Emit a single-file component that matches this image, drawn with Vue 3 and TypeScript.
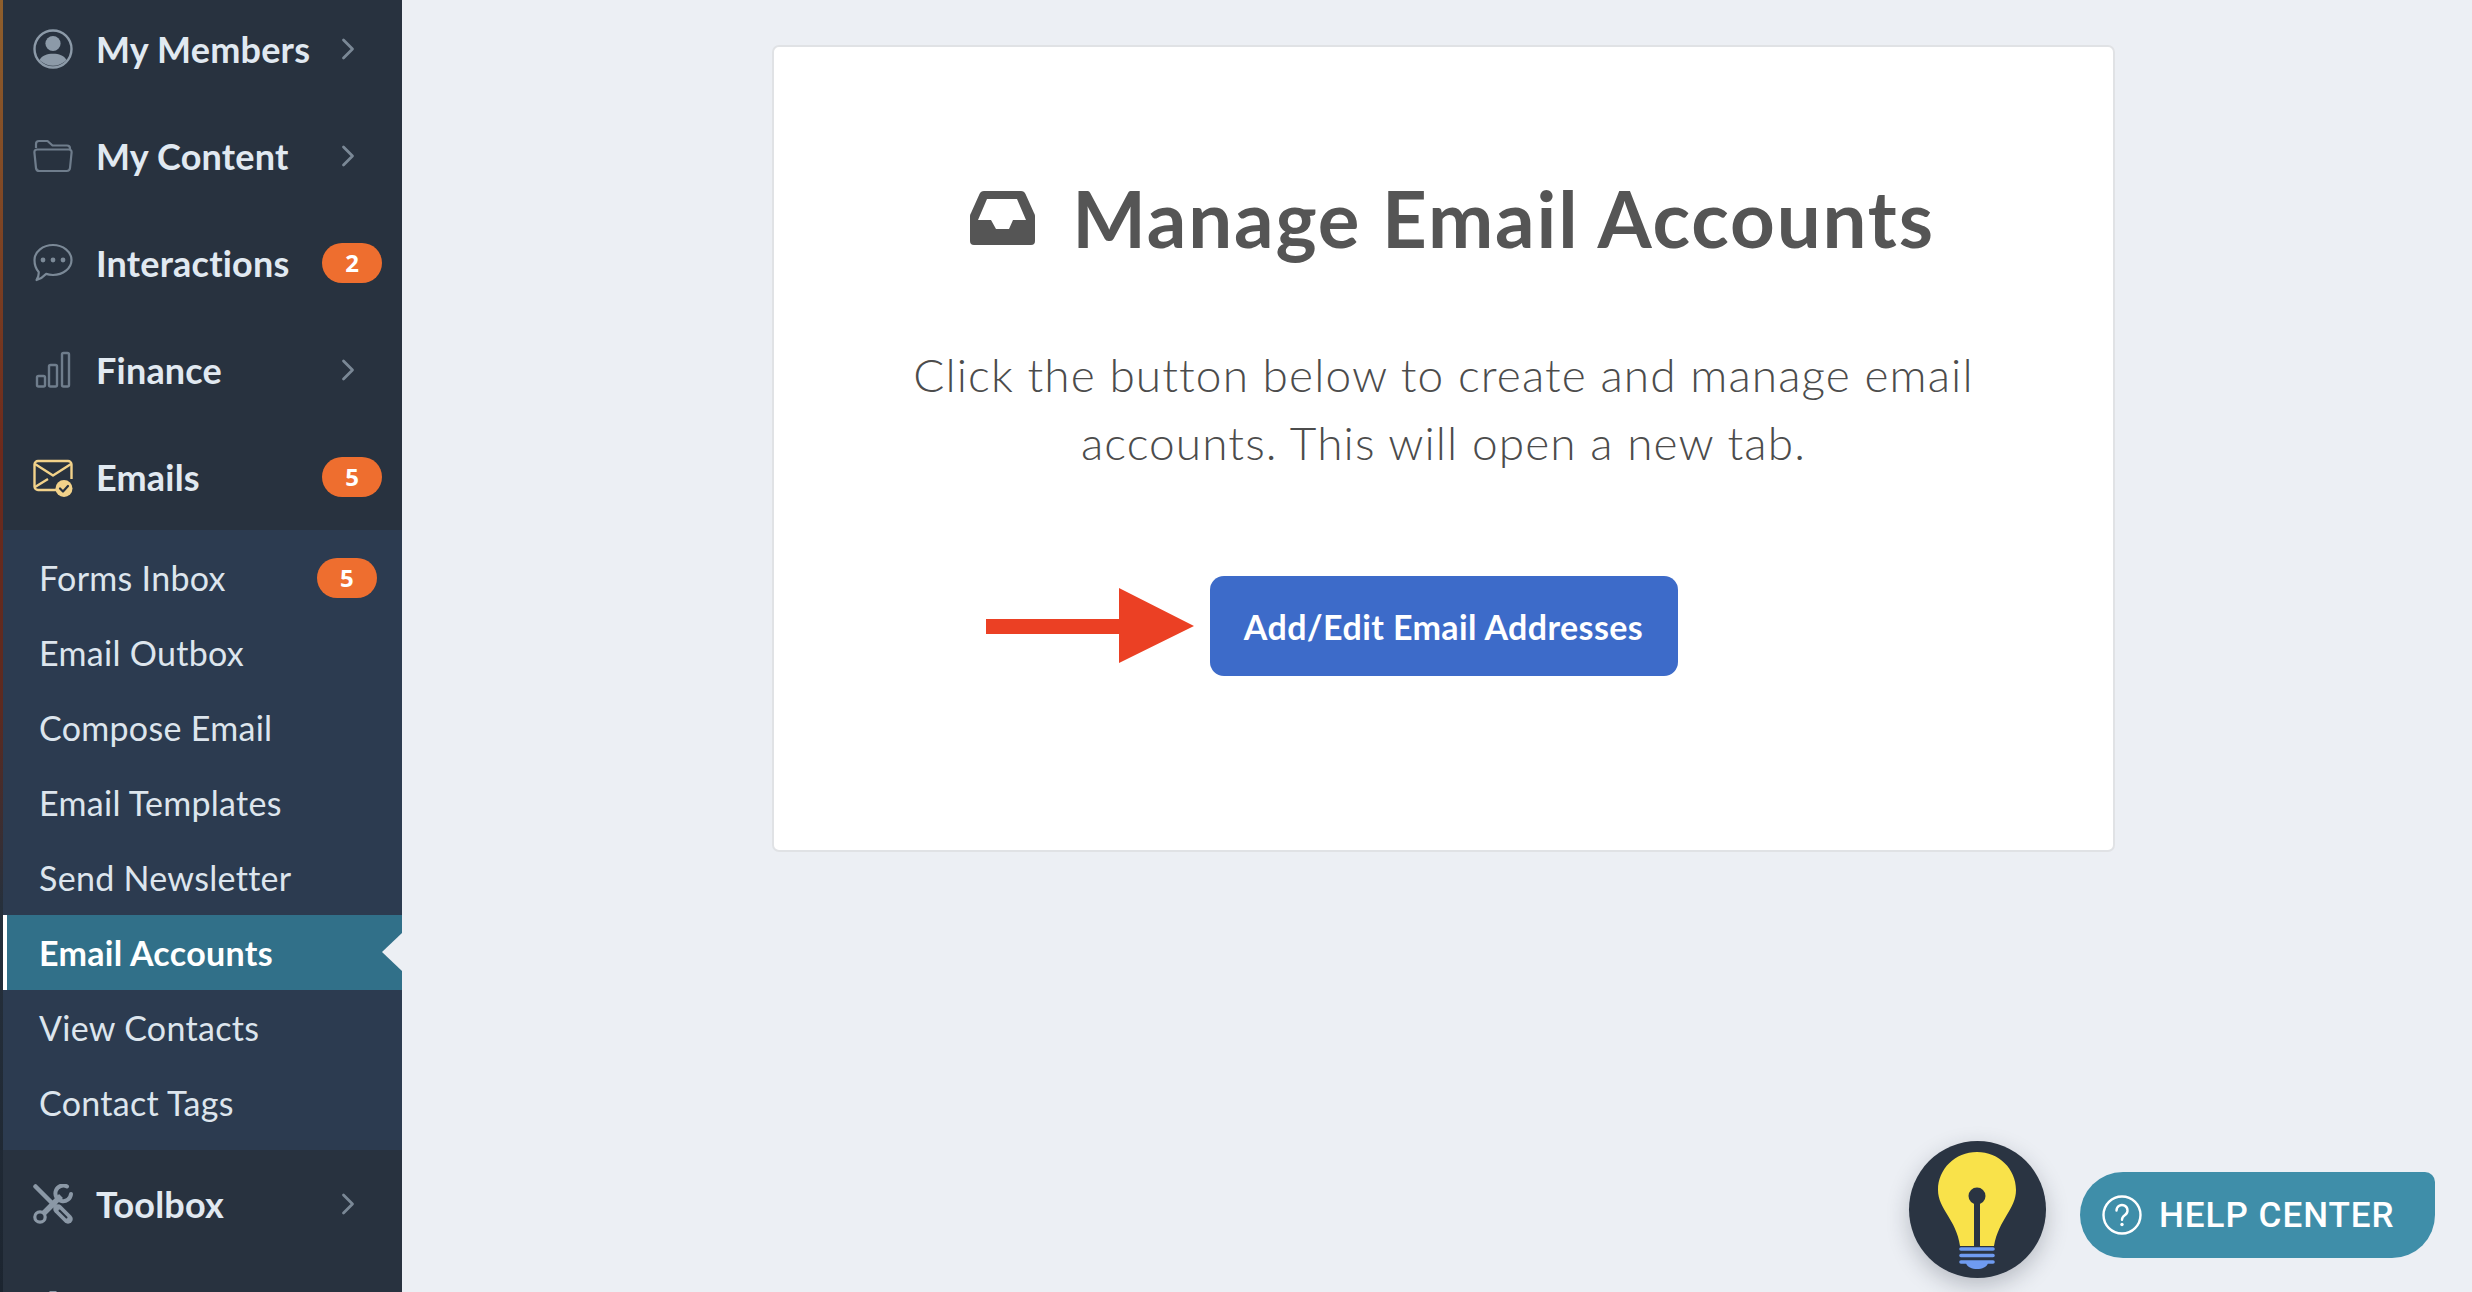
<template>
  <div class="page">
    <div class="strip"></div>
    <aside class="sidebar">
      <template v-for="item in navItems" :key="item.icon">
        <div class="nav-row">
          <span class="nav-icon">
            <svg v-if="item.icon === 'members'" viewBox="0 0 40 40">
              <circle cx="20" cy="20" r="18.5" fill="none" stroke="#8c9aa8" stroke-width="2.4" />
              <circle cx="20" cy="14.5" r="7.6" fill="#8c9aa8" />
              <path d="M6.5 31C9 26.5 14 24.8 20 24.8S31 26.5 33.5 31A18.5 18.5 0 0 1 6.5 31Z" fill="#8c9aa8" />
            </svg>
            <svg v-else-if="item.icon === 'content'" viewBox="0 0 40 40" fill="none" stroke="#6f7d8c" stroke-width="2.2" stroke-linejoin="round">
              <path d="M3 12V8a3 3 0 0 1 3-3h8.500l5 4.500H34a3 3 0 0 1 3 3v1" />
              <path d="M4 13.500h32a2.600 2.600 0 0 1 2.600 2.800L37 32a3.400 3.400 0 0 1-3.400 3H6.400A3.400 3.400 0 0 1 3 32L1.400 16.300A2.600 2.600 0 0 1 4 13.500Z" />
            </svg>
            <svg v-else-if="item.icon === 'chat'" viewBox="0 0 40 40" fill="none" stroke="#7b8997" stroke-width="2.2" stroke-linejoin="round">
              <path d="M20 2C30 2 38.500 8.500 38.500 17S30 32 20 32c-2.500 0-5-.4-7-1.100-2.500 2.800-5.500 4.800-9.500 6.100 1.800-2.800 2.400-5.300 2.200-8C3 26 1.500 21.800 1.500 17 1.500 8.500 10 2 20 2Z" />
              <g fill="#7b8997" stroke="none">
                <circle cx="10" cy="17" r="2.400" />
                <circle cx="20" cy="17" r="2.400" />
                <circle cx="30" cy="17" r="2.400" />
              </g>
            </svg>
            <svg v-else-if="item.icon === 'finance'" viewBox="0 0 40 40" fill="none" stroke="#6f7d8c" stroke-width="2.400">
              <rect x="4" y="26" width="8" height="10.500" rx="1.500" />
              <rect x="16" y="15" width="8" height="21.500" rx="1.500" />
              <rect x="29" y="3" width="7" height="33.500" rx="1.500" />
            </svg>
            <svg v-else-if="item.icon === 'emails'" viewBox="0 0 40 40" fill="none" stroke="#f2d28a" stroke-width="2.400" stroke-linejoin="round">
              <path d="M24 33H5a3.500 3.500 0 0 1-3.500-3.500v-22A3.500 3.500 0 0 1 5 4h30a3.500 3.500 0 0 1 3.500 3.500V22" />
              <path d="M2 7l18 11.500L38 7M2 30l13-8" />
              <circle cx="31" cy="31.500" r="8.500" fill="#f2d28a" stroke="none" />
              <path d="M27 31.500l3 3 5-5.500" stroke="#28323f" stroke-width="2.200" stroke-linecap="round" />
            </svg>
            <svg v-else-if="item.icon === 'tools'" viewBox="0 0 40 40" fill="none" stroke="#8b98a6">
              <path d="M2.500 2.500L22 22" stroke-width="4.500" stroke-linecap="round" />
              <path d="M25 25l10 10" stroke-width="9.500" stroke-linecap="round" />
              <path d="M26.500 26.500l7 7" stroke="#28323f" stroke-width="2" stroke-linecap="round" />
              <path d="M11 29L28 12" stroke-width="5.500" />
              <circle cx="7" cy="33" r="5.200" stroke-width="3.200" />
              <path d="M34 2.500A7.800 7.800 0 1 0 38 10" stroke-width="4" stroke-linecap="round" />
            </svg>
            <svg v-else viewBox="0 0 40 40">
              <circle cx="20" cy="4" r="5" fill="#8b98a6" />
            </svg>
          </span>
          <span class="nav-label">{{ item.label }}</span>
          <span v-if="item.badge" class="badge">{{ item.badge }}</span>
          <svg v-else-if="item.label" class="chevron" viewBox="0 0 14 22" fill="none" stroke="#7a8896" stroke-width="2.800" stroke-linecap="round" stroke-linejoin="round">
            <path d="M2.500 2l9 9-9 9" />
          </svg>
        </div>
        <div v-if="item.open" class="submenu">
          <div
            v-for="sub in subItems"
            :key="sub.label"
            class="sub-row"
            :class="{ active: sub.active }"
          >
            <span>{{ sub.label }}</span>
            <span v-if="sub.badge" class="badge">{{ sub.badge }}</span>
          </div>
        </div>
      </template>
    </aside>

    <main class="main">
      <section class="card">
        <h1 class="title">
          <svg class="title-icon" viewBox="0 0 65 54">
            <path
              fill="#555"
              fill-rule="evenodd"
              d="M14 0H51a5 5 0 0 1 4.500 3L64 22a6 6 0 0 1 1 4V50a4 4 0 0 1-4 4H4a4 4 0 0 1-4-4V26a6 6 0 0 1 1-4L9.500 3A5 5 0 0 1 14 0ZM17 8H47L56 29H43L39 38H26L21 29H8Z"
            />
          </svg>
          <span>Manage Email Accounts</span>
        </h1>
        <p class="lead">Click the button below to create and manage email accounts. This will open a new tab.</p>
        <div class="action">
          <svg class="arrow" viewBox="0 0 208 75">
            <path fill="#eb4024" d="M0 31H133V0L208 38 133 75V46H0Z" />
          </svg>
          <button class="primary" type="button">Add/Edit Email Addresses</button>
        </div>
      </section>
    </main>

    <div class="bulb">
      <svg viewBox="0 0 137 137">
        <path fill="#f9e24a" d="M68 11C90 11 107 28 107 49 107 68 90 78 85 105H51C47 78 29 68 29 49 29 28 46 11 68 11Z" />
        <circle cx="68" cy="55" r="8.500" fill="#2a3442" />
        <path d="M68 55V105" stroke="#2a3442" stroke-width="6" />
        <g stroke="#6f9bf0" stroke-width="3.600" stroke-linecap="round">
          <path d="M52 108H84M52 114.500H84M52 121H84" />
        </g>
        <path fill="#6f9bf0" d="M57 122H79C78 126 73 128 68 128S58 126 57 122Z" />
      </svg>
    </div>
    <div class="help">
      <svg class="help-icon" viewBox="0 0 40 40" fill="none" stroke="#fff">
        <circle cx="20" cy="20" r="18.500" stroke-width="2.400" />
        <path d="M14.500 15.500a5.500 5.500 0 1 1 8.500 4.600c-2 1.400-3 2.400-3 4.700" stroke-width="2.400" stroke-linecap="round" />
        <circle cx="20" cy="29.500" r="1.700" fill="#fff" stroke="none" />
      </svg>
      <span>HELP CENTER</span>
    </div>
  </div>
</template>

<script setup lang="ts">
interface NavItem {
  label: string;
  icon: string;
  badge?: number;
  open?: boolean;
}

interface SubItem {
  label: string;
  badge?: number;
  active?: boolean;
}

const navItems: NavItem[] = [
  { label: 'My Members', icon: 'members' },
  { label: 'My Content', icon: 'content' },
  { label: 'Interactions', icon: 'chat', badge: 2 },
  { label: 'Finance', icon: 'finance' },
  { label: 'Emails', icon: 'emails', badge: 5, open: true },
  { label: 'Toolbox', icon: 'tools' },
  { label: '', icon: 'more' }
];

const subItems: SubItem[] = [
  { label: 'Forms Inbox', badge: 5 },
  { label: 'Email Outbox' },
  { label: 'Compose Email' },
  { label: 'Email Templates' },
  { label: 'Send Newsletter' },
  { label: 'Email Accounts', active: true },
  { label: 'View Contacts' },
  { label: 'Contact Tags' }
];
</script>

<style>
html,
body {
  margin: 0;
  background: #eceff4;
}
</style>

<style scoped>
.page {
  position: relative;
  display: flex;
  width: 2472px;
  height: 1292px;
  overflow: hidden;
  background: #eceff4;
  font-family: Lato, 'Noto Sans', sans-serif;
}

.strip {
  flex: 0 0 3px;
  background: linear-gradient(180deg, #8f5f2c 0%, #6d2a1c 35%, #5c2a20 55%, #26303c 70%, #1c2530 100%);
}

.sidebar {
  flex: 0 0 399px;
  margin-top: -5px;
  background: #28323f;
}

.nav-row {
  display: flex;
  align-items: center;
  height: 107px;
  padding-left: 30px;
  padding-right: 20px;
  box-sizing: border-box;
}

.nav-icon {
  flex: 0 0 40px;
  width: 40px;
  height: 40px;
}

.nav-icon svg {
  display: block;
  width: 40px;
  height: 40px;
}

.nav-label {
  flex: 1;
  margin-left: 23px;
  color: #e1e9f1;
  font-size: 36px;
  font-weight: 700;
  letter-spacing: 0.2px;
}

.chevron {
  width: 14px;
  height: 22px;
  margin-right: 27px;
}

.badge {
  display: flex;
  align-items: center;
  justify-content: center;
  width: 60px;
  height: 40px;
  border-radius: 20px;
  background: #ee6e2f;
  color: #fff;
  font-family: 'Open Sans', sans-serif;
  font-size: 24px;
  font-weight: 700;
}

.submenu {
  padding: 10px 0;
  background: #2c3b50;
}

.sub-row {
  display: flex;
  align-items: center;
  justify-content: space-between;
  height: 75px;
  padding: 0 25px 0 36px;
  color: #dde5ed;
  font-size: 34px;
  letter-spacing: 0.3px;
  position: relative;
}

.sub-row.active {
  padding-left: 32px;
  border-left: 4px solid #fff;
  background: #317089;
  color: #fff;
  font-weight: 700;
}

.sub-row.active::after {
  content: '';
  position: absolute;
  top: 18px;
  right: 0;
  border-top: 19px solid transparent;
  border-bottom: 19px solid transparent;
  border-right: 20px solid #eceff4;
}

.main {
  flex: 1;
  padding: 45px 0 0 370px;
}

.card {
  width: 1343px;
  box-sizing: border-box;
  padding: 127px 0 174px;
  border: 2px solid #e0e2e5;
  border-radius: 7px;
  background: #fff;
  text-align: center;
}

.title {
  display: flex;
  align-items: center;
  justify-content: center;
  gap: 37px;
  height: 88px;
  margin: 0;
  padding-left: 18px;
  color: #555;
  font-size: 78px;
  font-weight: 700;
  line-height: 88px;
  letter-spacing: 1.85px;
}

.title-icon {
  width: 65px;
  height: 54px;
}

.lead {
  width: 1120px;
  margin: 79px auto 0;
  color: #4c4c4c;
  font-size: 46px;
  font-weight: 300;
  line-height: 68px;
  letter-spacing: 1.1px;
}

.action {
  position: relative;
  width: 468px;
  margin: 99px auto 0;
}

.primary {
  display: block;
  width: 468px;
  height: 100px;
  padding: 0;
  border: 0;
  border-radius: 14px;
  background: #3d6bc9;
  color: #fff;
  font-family: Lato, sans-serif;
  font-size: 34px;
  font-weight: 700;
  letter-spacing: 0.4px;
}

.arrow {
  position: absolute;
  top: 12px;
  right: 484px;
  width: 208px;
  height: 75px;
}

.bulb {
  position: absolute;
  left: 1909px;
  top: 1141px;
  width: 137px;
  height: 137px;
  border-radius: 50%;
  background: #2a3442;
  box-shadow: 0 8px 22px rgba(30, 40, 55, 0.25);
}

.bulb svg {
  display: block;
  width: 137px;
  height: 137px;
}

.help {
  position: absolute;
  left: 2080px;
  top: 1172px;
  display: flex;
  align-items: center;
  gap: 17px;
  width: 355px;
  height: 86px;
  box-sizing: border-box;
  padding: 0 0 0 22px;
  border-radius: 43px 10px 43px 43px;
  background: #3f8ea9;
  color: #fff;
  font-family: Roboto, sans-serif;
  font-size: 35px;
  font-weight: 500;
  letter-spacing: 1px;
}

.help-icon {
  width: 40px;
  height: 40px;
}
</style>
